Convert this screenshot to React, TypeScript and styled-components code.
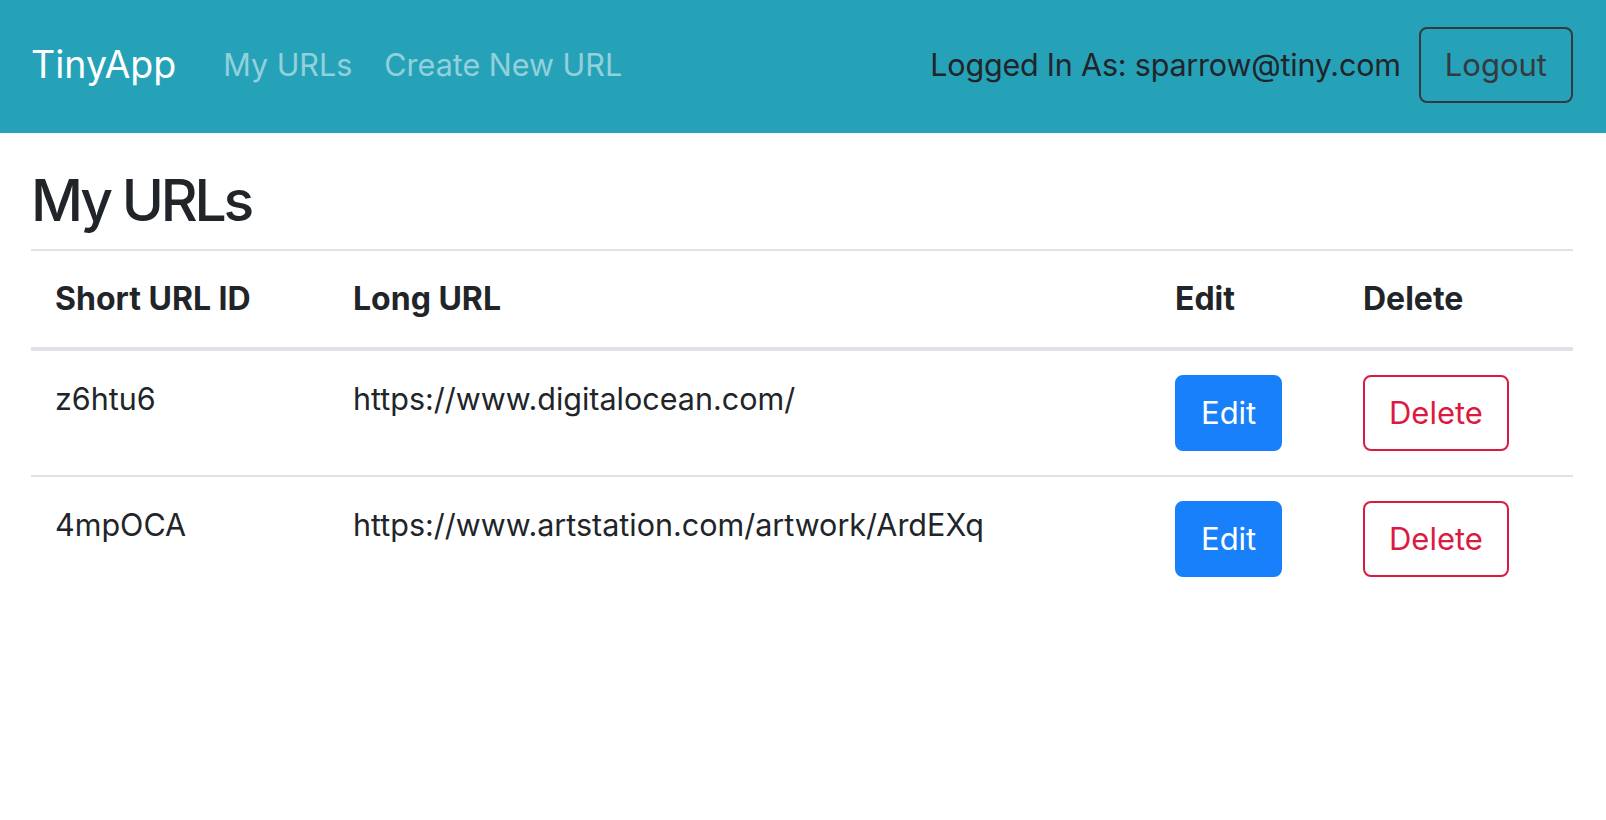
import React from 'react';
import styled, { createGlobalStyle } from 'styled-components';

const GlobalStyle = createGlobalStyle`
    body {
        margin: 0;
        font-family: Inter, 'Liberation Sans', sans-serif;
        font-size: 30.5px;
        line-height: 48px;
        color: #212529;
        background: #fff;
    }
    * {
        box-sizing: border-box;
    }
`;

const Navbar = styled.nav`
    display: flex;
    align-items: center;
    height: 133px;
    padding: 0 33px 4px 31px;
    background: #25a2b8;
`;

const Brand = styled.a`
    font-size: 37.5px;
    line-height: 60px;
    color: #fff;
    margin-right: 31px;
    text-decoration: none;
`;

const NavLinks = styled.div`
    display: flex;
`;

const NavLink = styled.a`
    padding: 0 16px;
    color: rgba(255, 255, 255, 0.5);
    text-decoration: none;
`;

const UserArea = styled.div`
    margin-left: auto;
    display: flex;
    align-items: center;
    gap: 18px;
`;

const UserText = styled.span`
    color: #212529;
    letter-spacing: -0.2px;
`;

type ButtonProps = {
    variant: 'primary' | 'outlineDanger' | 'outlineDark';
};

const palette = {
    primary: { bg: '#1880fb', border: '#1880fb', color: '#fff' },
    outlineDanger: { bg: 'transparent', border: '#db1a42', color: '#db1a42' },
    outlineDark: { bg: 'transparent', border: '#343a40', color: '#343a40' },
};

const Button = styled.button<ButtonProps>`
    font-family: inherit;
    font-size: 31px;
    line-height: 48px;
    padding: 12px 24px;
    border-radius: 8px;
    border: 2px solid ${(p) => palette[p.variant].border};
    background: ${(p) => palette[p.variant].bg};
    color: ${(p) => palette[p.variant].color};
    cursor: pointer;
`;

const Container = styled.main`
    padding: 30px 33px 0 31px;
`;

const Heading = styled.h2`
    font-size: 57px;
    font-weight: 500;
    letter-spacing: -3.2px;
    line-height: 76.8px;
    margin: 0 0 9px;
`;

const Table = styled.table`
    width: 100%;
    border-collapse: collapse;
    table-layout: fixed;
`;

const Col = styled.col<{ w: number }>`
    width: ${(p) => p.w}px;
`;

const Th = styled.th`
    text-align: left;
    font-size: 32px;
    font-weight: 700;
    padding: 24px;
    vertical-align: bottom;
    border-top: 2px solid #dee2e6;
    border-bottom: 4px solid #dee2e6;
`;

const Td = styled.td`
    padding: 24px;
    vertical-align: top;
    border-top: 2px solid #dee2e6;
`;

const Row = styled.tr`
    &:first-child > td {
        border-top: none;
    }
`;

const urls = [
    { id: 'z6htu6', long: 'https://www.digitalocean.com/' },
    { id: '4mpOCA', long: 'https://www.artstation.com/artwork/ArdEXq' },
];

export default function App() {
    return (
        <>
            <GlobalStyle />
            <Navbar>
                <Brand href="#">TinyApp</Brand>
                <NavLinks>
                    <NavLink href="#">My URLs</NavLink>
                    <NavLink href="#">Create New URL</NavLink>
                </NavLinks>
                <UserArea>
                    <UserText>Logged In As: sparrow@tiny.com</UserText>
                    <Button variant="outlineDark">Logout</Button>
                </UserArea>
            </Navbar>
            <Container>
                <Heading>My URLs</Heading>
                <Table>
                    <colgroup>
                        <Col w={298} />
                        <Col w={822} />
                        <Col w={188} />
                        <Col w={234} />
                    </colgroup>
                    <thead>
                        <tr>
                            <Th>Short URL ID</Th>
                            <Th>Long URL</Th>
                            <Th>Edit</Th>
                            <Th>Delete</Th>
                        </tr>
                    </thead>
                    <tbody>
                        {urls.map((u) => (
                            <Row key={u.id}>
                                <Td>{u.id}</Td>
                                <Td>{u.long}</Td>
                                <Td>
                                    <Button variant="primary">Edit</Button>
                                </Td>
                                <Td>
                                    <Button variant="outlineDanger">Delete</Button>
                                </Td>
                            </Row>
                        ))}
                    </tbody>
                </Table>
            </Container>
        </>
    );
}
